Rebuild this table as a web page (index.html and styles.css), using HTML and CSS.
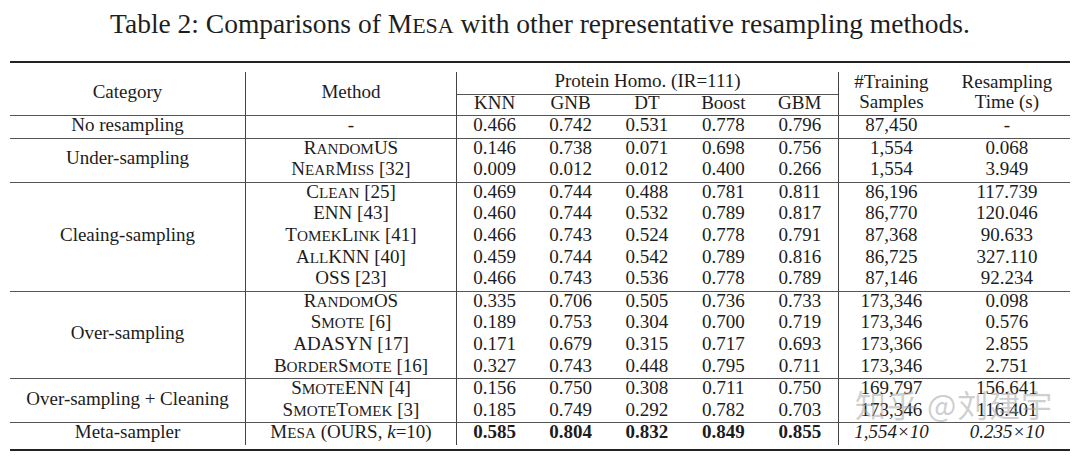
FILE: index.html
```html
<!DOCTYPE html>
<html lang="en">
<head>
<meta charset="utf-8">
<title>Table 2</title>
<link rel="stylesheet" href="styles.css">
</head>
<body>
<div class="page">
  <h1 class="caption">Table 2: Comparisons of M<span class="s">esa</span> with other representative resampling methods.</h1>
  <table class="tbl">
    <colgroup>
      <col class="c-cat"><col class="c-meth">
      <col class="c-num"><col class="c-num"><col class="c-num"><col class="c-num"><col class="c-num">
      <col class="c-train"><col class="c-time">
    </colgroup>
    <thead>
      <tr class="sp-top"><td colspan="9"></td></tr>
      <tr class="h1">
        <td rowspan="2">Category</td>
        <td rowspan="2" class="bl">Method</td>
        <td colspan="5" class="bl">Protein Homo. (IR=111)</td>
        <td rowspan="2" class="bl two">#Training<br>Samples</td>
        <td rowspan="2" class="two">Resampling<br>Time (s)</td>
      </tr>
      <tr class="h2">
        <td class="bl bt">KNN</td><td class="bt">GNB</td><td class="bt">DT</td><td class="bt">Boost</td><td class="bt">GBM</td>
      </tr>
    </thead>
    <tbody>
      <tr class="g">
        <td>No resampling</td><td class="bl">-</td>
        <td class="bl">0.466</td><td>0.742</td><td>0.531</td><td>0.778</td><td>0.796</td>
        <td class="bl">87,450</td><td>-</td>
      </tr>
      <tr class="g">
        <td rowspan="2">Under-sampling</td><td class="bl">R<span class="s">andom</span>US</td>
        <td class="bl">0.146</td><td>0.738</td><td>0.071</td><td>0.698</td><td>0.756</td>
        <td class="bl">1,554</td><td>0.068</td>
      </tr>
      <tr>
        <td class="bl">N<span class="s">ear</span>M<span class="s">iss</span> [32]</td>
        <td class="bl">0.009</td><td>0.012</td><td>0.012</td><td>0.400</td><td>0.266</td>
        <td class="bl">1,554</td><td>3.949</td>
      </tr>
      <tr class="g">
        <td rowspan="5">Cleaing-sampling</td><td class="bl">C<span class="s">lean</span> [25]</td>
        <td class="bl">0.469</td><td>0.744</td><td>0.488</td><td>0.781</td><td>0.811</td>
        <td class="bl">86,196</td><td>117.739</td>
      </tr>
      <tr>
        <td class="bl">ENN [43]</td>
        <td class="bl">0.460</td><td>0.744</td><td>0.532</td><td>0.789</td><td>0.817</td>
        <td class="bl">86,770</td><td>120.046</td>
      </tr>
      <tr>
        <td class="bl">T<span class="s">omek</span>L<span class="s">ink</span> [41]</td>
        <td class="bl">0.466</td><td>0.743</td><td>0.524</td><td>0.778</td><td>0.791</td>
        <td class="bl">87,368</td><td>90.633</td>
      </tr>
      <tr>
        <td class="bl">A<span class="s">ll</span>KNN [40]</td>
        <td class="bl">0.459</td><td>0.744</td><td>0.542</td><td>0.789</td><td>0.816</td>
        <td class="bl">86,725</td><td>327.110</td>
      </tr>
      <tr>
        <td class="bl">OSS [23]</td>
        <td class="bl">0.466</td><td>0.743</td><td>0.536</td><td>0.778</td><td>0.789</td>
        <td class="bl">87,146</td><td>92.234</td>
      </tr>
      <tr class="g">
        <td rowspan="4">Over-sampling</td><td class="bl">R<span class="s">andom</span>OS</td>
        <td class="bl">0.335</td><td>0.706</td><td>0.505</td><td>0.736</td><td>0.733</td>
        <td class="bl">173,346</td><td>0.098</td>
      </tr>
      <tr>
        <td class="bl">S<span class="s">mote</span> [6]</td>
        <td class="bl">0.189</td><td>0.753</td><td>0.304</td><td>0.700</td><td>0.719</td>
        <td class="bl">173,346</td><td>0.576</td>
      </tr>
      <tr>
        <td class="bl">ADASYN [17]</td>
        <td class="bl">0.171</td><td>0.679</td><td>0.315</td><td>0.717</td><td>0.693</td>
        <td class="bl">173,366</td><td>2.855</td>
      </tr>
      <tr>
        <td class="bl">B<span class="s">order</span>S<span class="s">mote</span> [16]</td>
        <td class="bl">0.327</td><td>0.743</td><td>0.448</td><td>0.795</td><td>0.711</td>
        <td class="bl">173,346</td><td>2.751</td>
      </tr>
      <tr class="g">
        <td rowspan="2">Over-sampling + Cleaning</td><td class="bl">S<span class="s">mote</span>ENN [4]</td>
        <td class="bl">0.156</td><td>0.750</td><td>0.308</td><td>0.711</td><td>0.750</td>
        <td class="bl">169,797</td><td>156.641</td>
      </tr>
      <tr>
        <td class="bl">S<span class="s">mote</span>T<span class="s">omek</span> [3]</td>
        <td class="bl">0.185</td><td>0.749</td><td>0.292</td><td>0.782</td><td>0.703</td>
        <td class="bl">173,346</td><td>116.401</td>
      </tr>
      <tr class="g last">
        <td>Meta-sampler</td><td class="bl">M<span class="s">esa</span> (OURS, <i>k</i>=10)</td>
        <td class="bl b">0.585</td><td class="b">0.804</td><td class="b">0.832</td><td class="b">0.849</td><td class="b">0.855</td>
        <td class="bl it">1,554×10</td><td class="it">0.235×10</td>
      </tr>
      <tr class="sp-bot"><td colspan="9"></td></tr>
    </tbody>
  </table>
  <span class="watermark">知乎 @刘建宇</span>
</div>
</body>
</html>
```
FILE: styles.css
```css
html, body {
  margin: 0;
  padding: 0;
  background: #ffffff;
}

body {
  font-family: "Liberation Serif", "Times New Roman", "Noto Sans CJK SC", serif;
  color: #1c1c1c;
}

.page {
  position: relative;
  width: 1080px;
  height: 460px;
  overflow: hidden;
}

.caption {
  margin: 0;
  padding-top: 8px;
  height: 33px;
  font-size: 27.5px;
  line-height: 32px;
  font-weight: normal;
  text-align: center;
  color: #1e1e1e;
}

/* hand-set small capitals */
.s {
  font-size: 0.8em;
  line-height: 0;
  text-transform: uppercase;
}

.tbl {
  margin: 20px 0 0 10px;
  width: 1060px;
  table-layout: fixed;
  border-collapse: separate;
  border-spacing: 0;
  border-top: 2px solid #222;
  border-bottom: 2px solid #222;
  font-size: 19px;
}

.c-cat { width: 235px; }
.c-meth { width: 211px; }
.c-num { width: 76.4px; }
.c-train { width: 106px; }
.c-time { width: 126px; }

.tbl td {
  padding: 0 0 4px;
  text-align: center;
  vertical-align: middle;
  line-height: 17.6px;
  white-space: nowrap;
}

.tbl i {
  line-height: 0;
}

.tbl .bl {
  border-left: 1px solid #444;
}

.tbl .bt {
  border-top: 1px solid #555;
}

.tbl tr.g > td {
  border-top: 1px solid #555;
}

.tbl tr.sp-top > td {
  height: 9px;
  padding: 0;
  line-height: 9px;
}

.tbl tr.sp-bot > td {
  height: 4px;
  padding: 0;
  line-height: 4px;
}

.tbl tr.h1 > td {
  padding: 0 0 5px;
  line-height: 17px;
}

.tbl tr.h1 > td.two {
  padding: 0;
  vertical-align: top;
  line-height: 20px;
}

.tbl tr.h2 > td {
  padding: 0 0 4px;
  line-height: 16px;
}

.tbl td.b {
  font-weight: bold;
}

.tbl td.it {
  font-style: italic;
}

.watermark {
  position: absolute;
  left: 855px;
  top: 386px;
  font-family: "Noto Sans CJK SC", sans-serif;
  font-size: 31px;
  line-height: 36px;
  color: rgba(160, 160, 160, 0.5);
  letter-spacing: 1px;
  white-space: nowrap;
}
```
